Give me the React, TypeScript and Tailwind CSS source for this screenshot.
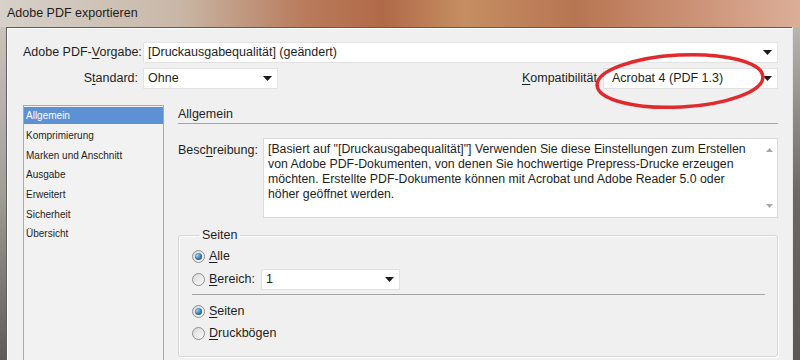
import React from 'react';

const Arrow: React.FC = () => (
    <svg width="9" height="5" viewBox="0 0 9 5" className="shrink-0">
        <path d="M0 0h9L4.5 5z" fill="#1a1a1a" />
    </svg>
);

const Select: React.FC<{ value: string; className?: string }> = ({ value, className = '' }) => (
    <div className={`h-[21px] bg-white border border-[#e2e2e2] flex items-center pl-[4px] pr-[5px] ${className}`}>
        <span className="flex-1 truncate">{value}</span>
        <Arrow />
    </div>
);

const Radio: React.FC<{ checked?: boolean }> = ({ checked }) => (
    <span className="w-[13px] h-[13px] rounded-full border border-[#8e8f8f] bg-gradient-to-br from-[#d8d8d8] to-[#fbfbfb] flex items-center justify-center shrink-0">
        {checked && (
            <span className="w-[7px] h-[7px] rounded-full bg-[radial-gradient(circle_at_35%_35%,#9fd4f4,#1e6fa8_60%,#0d4a78)]" />
        )}
    </span>
);

const sections = ['Allgemein', 'Komprimierung', 'Marken und Anschnitt', 'Ausgabe', 'Erweitert', 'Sicherheit', 'Übersicht'];

const App: React.FC = () => {
    return (
        <div className="relative w-[800px] h-[360px] overflow-hidden flex flex-col bg-[#6a6764] text-[#1e1e1e] font-['Liberation_Sans',Arial,sans-serif]">
            {/* Title bar */}
            <div className="h-[27px] shrink-0 flex items-center pl-[7px] bg-[linear-gradient(90deg,#d6d1ca_0%,#c9b8a8_22%,#b97b5c_38%,#b06a48_48%,#c58e62_58%,#b77552_72%,#c98f72_85%,#dcae98_100%)]">
                <span className="text-[12.5px] text-[#1c1c1c]">Adobe PDF exportieren</span>
            </div>

            <div className="flex-1 flex min-h-0">
                <div className="w-[6px] shrink-0 bg-gradient-to-b from-[#c9c3bb] via-[#a19d98] to-[#5e5c5a]" />

                {/* Dialog body */}
                <div className="flex-1 min-w-0 bg-[#f0f0f0] border-t border-l border-[#5d5d5d] shadow-[inset_1px_1px_0_#ffffff] pt-[14px] pr-[14px] pl-[16px] flex flex-col text-[12.5px]">
                    {/* Preset row */}
                    <div className="flex items-center h-[21px]">
                        <span className="w-[115px] text-right shrink-0 whitespace-nowrap">
                            Adobe PDF-<span className="underline underline-offset-2">V</span>orgabe:
                        </span>
                        <Select value="[Druckausgabequalität] (geändert)" className="flex-1 ml-[5px]" />
                    </div>

                    <div className="flex items-center h-[21px] mt-[5px]">
                        <span className="w-[115px] text-right shrink-0 whitespace-nowrap">
                            S<span className="underline underline-offset-2">t</span>andard:
                        </span>
                        <Select value="Ohne" className="w-[135px] ml-[5px]" />
                        <span className="flex-1" />
                        <span className="mr-[6px] whitespace-nowrap">
                            <span className="underline underline-offset-2">K</span>ompatibilität
                        </span>
                        <Select value="Acrobat 4 (PDF 1.3)" className="w-[175px] pl-[8px]" />
                    </div>

                    {/* Main area */}
                    <div className="flex gap-[14px] mt-[16px] flex-1 min-h-0">
                        <div className="w-[141px] shrink-0 border border-[#a9a9a9] bg-[#f2f2f2] pt-px text-[10px] -mb-px">
                            {sections.map((s, i) => (
                                <div
                                    key={s}
                                    className={`flex items-center pl-[2px] whitespace-nowrap ${i === 0 ? 'bg-[#5d91d4] text-white h-[17px] mb-[2px]' : 'h-[19.6px]'}`}
                                >
                                    {s}
                                </div>
                            ))}
                        </div>

                        <div className="flex-1 min-w-0 flex flex-col">
                            <div className="h-[19px] border-b border-[#a3a3a3] text-[12.5px] flex items-center">Allgemein</div>

                            <div className="flex mt-[14px]">
                                <span className="w-[85px] shrink-0 pt-[3px] whitespace-nowrap">
                                    Besc<span className="underline underline-offset-2">h</span>reibung:
                                </span>
                                <div className="flex-1 h-[80px] bg-white border border-[#dadada] flex">
                                    <p className="flex-1 pl-[4px] pt-[3px] pr-[2px] text-[12.3px] leading-[15px]">
                                        [Basiert auf "[Druckausgabequalität]"] Verwenden Sie diese Einstellungen zum Erstellen
                                        von Adobe PDF-Dokumenten, von denen Sie hochwertige Prepress-Drucke erzeugen
                                        möchten. Erstellte PDF-Dokumente können mit Acrobat und Adobe Reader 5.0 oder
                                        höher geöffnet werden.
                                    </p>
                                    <div className="w-[16px] shrink-0 flex flex-col items-center justify-between py-[9px]">
                                        <svg width="7" height="4" viewBox="0 0 7 4"><path d="M3.5 0L7 4H0z" fill="#a8a8a8" /></svg>
                                        <svg width="7" height="4" viewBox="0 0 7 4"><path d="M0 0h7L3.5 4z" fill="#a8a8a8" /></svg>
                                    </div>
                                </div>
                            </div>

                            {/* Seiten group */}
                            <fieldset className="mt-[10px] border border-[#d6d6d6] rounded-[3px] shadow-[inset_1px_1px_0_#ffffff,1px_1px_0_#ffffff] pl-[13px] pr-[11px] pb-[12px]">
                                <legend className="ml-[7px] px-[3px] leading-[14px]">Seiten</legend>
                                <div className="flex items-center gap-[4px] h-[21px] mt-[4px]">
                                    <Radio checked />
                                    <span><span className="underline underline-offset-2">A</span>lle</span>
                                </div>
                                <div className="flex items-center h-[21px] mt-[2px]">
                                    <Radio />
                                    <span className="ml-[4px] w-[52px]"><span className="underline underline-offset-2">B</span>ereich:</span>
                                    <Select value="1" className="w-[139px]" />
                                </div>
                                <div className="h-px bg-[#a4a4a4] mt-[4px] mr-[1px]" />
                                <div className="flex items-center gap-[4px] h-[21px] mt-[6px]">
                                    <Radio checked />
                                    <span><span className="underline underline-offset-2">S</span>eiten</span>
                                </div>
                                <div className="flex items-center gap-[4px] h-[21px] mt-[1px]">
                                    <Radio />
                                    <span><span className="underline underline-offset-2">D</span>ruckbögen</span>
                                </div>
                            </fieldset>
                        </div>
                    </div>
                </div>

                <div className="w-[8px] shrink-0 bg-gradient-to-b from-[#b9b4ae] via-[#6b6967] to-[#5a5856] border-l border-[#e6e6e6]" />
            </div>

            {/* Highlight annotation */}
            <svg className="absolute left-[592px] top-[50px] pointer-events-none" width="180" height="62" viewBox="0 0 180 62">
                <ellipse cx="88" cy="31" rx="83" ry="26" transform="rotate(-3 88 31)" fill="none" stroke="#e12a2e" strokeWidth="3.5" />
            </svg>
        </div>
    );
};

export default App;
